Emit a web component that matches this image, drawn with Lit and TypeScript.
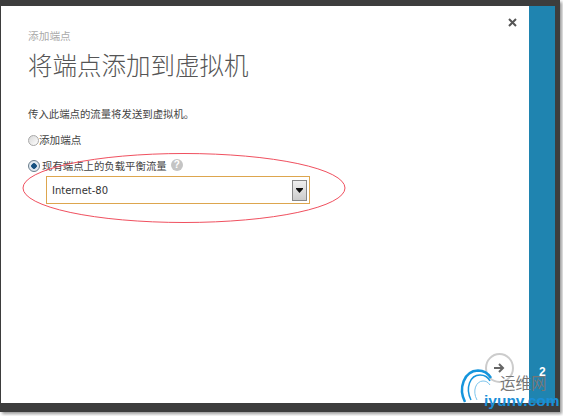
import {LitElement, css, html} from "lit";
import {customElement} from "lit/decorators.js";

@customElement("app-root")
export class AppRoot extends LitElement {
    static styles = css`
        :host {
            display: block;
            position: relative;
            width: 563px;
            height: 416px;
            overflow: hidden;
            background: #fff;
            font-family: "Noto Sans CJK SC", "Liberation Sans", sans-serif;
        }
        .frame {
            width: 560px;
            height: 412px;
            box-sizing: border-box;
            display: flex;
            background: #3d3d3d;
            padding: 6px 5px 9px 1px;
            box-shadow: 2px 2px 3px #999;
        }
        .dialog {
            flex: 1;
            background: #fff;
            padding: 23px 0 0 27px;
            position: relative;
            color: #555;
        }
        .side {
            width: 26px;
            background: #1f84b0;
        }
        .crumb {
            font-size: 10.7px;
            line-height: 14px;
            color: #aaa;
        }
        h1 {
            margin: 7px 0 0;
            font-size: 24.5px;
            line-height: 30px;
            font-weight: 300;
            color: #555;
        }
        .lead {
            margin: 27px 0 0;
            font-size: 10.4px;
            line-height: 14px;
            color: #444;
        }
        .opt {
            display: flex;
            align-items: center;
            font-size: 10.6px;
            line-height: 14px;
            color: #444;
        }
        .opt.first { margin-top: 12px; }
        .opt.second {
            margin-top: 12px;
            font-size: 10.4px;
        }
        .radio {
            width: 11px;
            height: 11px;
            box-sizing: border-box;
            border-radius: 50%;
            border: 1px solid #a8a8a8;
            background: linear-gradient(135deg, #d8d8d8, #fff);
        }
        .radio.on {
            width: 12px;
            height: 12px;
            background: radial-gradient(circle, #15507f 0 2.5px, #dfe8ef 3px);
            border-color: #6a7d8c;
            margin-right: 2px;
        }
        .help {
            width: 12px;
            height: 12px;
            border-radius: 50%;
            background: #c4c4c4;
            color: #fff;
            font: bold 10px/12px "Liberation Sans", sans-serif;
            text-align: center;
            margin-left: 4px;
            margin-top: -3px;
        }
        .select {
            margin: 3px 0 0 18px;
            width: 264px;
            height: 28px;
            box-sizing: border-box;
            border: 1px solid #dda64e;
            display: flex;
            align-items: center;
            justify-content: space-between;
            padding: 0 2px 0 5px;
            font: 10px "DejaVu Sans", sans-serif;
            color: #333;
        }
        .drop {
            width: 15px;
            height: 21px;
            box-sizing: border-box;
            border: 1px solid #888;
            background: linear-gradient(#efefef, #ccc);
            display: flex;
            align-items: center;
            justify-content: center;
        }
        .close {
            position: absolute;
            top: 12px;
            right: 12px;
            width: 9px;
            height: 9px;
        }
        .next {
            position: absolute;
            left: 485px;
            top: 353px;
            width: 29px;
            height: 30px;
            box-sizing: border-box;
            border: 2px solid #ccc;
            border-radius: 50%;
            display: flex;
            align-items: center;
            justify-content: center;
        }
        .step {
            position: absolute;
            left: 539px;
            top: 365px;
            font: bold 12px "Liberation Sans", sans-serif;
            color: #fff;
        }
        .overlay {
            position: absolute;
            left: 0;
            top: 0;
            pointer-events: none;
        }
        .mark-cn {
            position: absolute;
            left: 500px;
            top: 372px;
            font-size: 15.5px;
            line-height: 20px;
            color: #777;
        }
        .mark-en {
            position: absolute;
            left: 484px;
            top: 393px;
            font: bold 15.5px/16px "Liberation Sans", sans-serif;
            color: #1a8fd8;
        }
    `;

    protected render() {
        return html`
            <div class="frame">
                <div class="dialog">
                    <div class="crumb">添加端点</div>
                    <h1>将端点添加到虚拟机</h1>
                    <p class="lead">传入此端点的流量将发送到虚拟机。</p>
                    <div class="opt first"><span class="radio"></span>添加端点</div>
                    <div class="opt second">
                        <span class="radio on"></span>现有端点上的负载平衡流量<span class="help">?</span>
                    </div>
                    <div class="select">
                        <span>Internet-80</span>
                        <span class="drop">
                            <svg width="7" height="5" viewBox="0 0 7 5"><path d="M0 0h7v1L3.5 5 0 1z" fill="#111"/></svg>
                        </span>
                    </div>
                    <svg class="close" viewBox="0 0 9 9">
                        <path d="M1 1l7 7M8 1L1 8" stroke="#555" stroke-width="2" fill="none"/>
                    </svg>
                </div>
                <div class="side"></div>
            </div>
            <div class="next">
                <svg width="11" height="10" viewBox="0 0 11 10">
                    <path d="M0 5h9M5 1l4 4-4 4" stroke="#666" stroke-width="2" fill="none"/>
                </svg>
            </div>
            <div class="step">2</div>
            <svg class="overlay" width="563" height="416" viewBox="0 0 563 416">
                <ellipse cx="184" cy="188" rx="161" ry="34.5" fill="none" stroke="#f0505f" stroke-width="1"/>
                <path d="M465 402C458 388 464 371 478 370.5C484 370.5 488 373 491 378" fill="none" stroke="#1595dc" stroke-width="2.5"/>
                <path d="M471 400C465 388 470 375 480 375C485 375 488 377 490 381" fill="none" stroke="#1595dc" stroke-width="1.5"/>
                <path d="M477 400C472 391 476 381 483 381C486 381 488 382 490 385" fill="none" stroke="#7cc4ec" stroke-width="1"/>
            </svg>
            <div class="mark-cn">运维网</div>
            <div class="mark-en">iyunv.com</div>
        `;
    }
}
